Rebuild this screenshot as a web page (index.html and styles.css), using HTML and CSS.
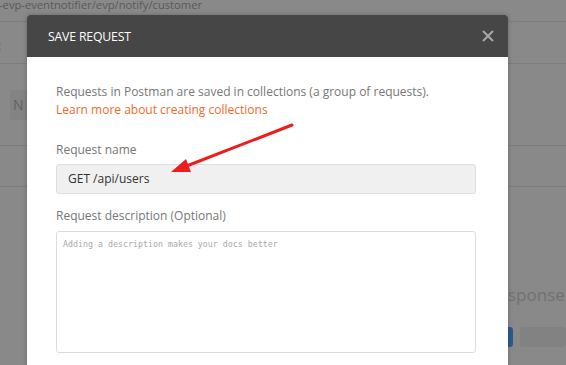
FILE: index.html
```html
<!DOCTYPE html>
<html>
<head>
<meta charset="utf-8">
<link rel="stylesheet" href="styles.css">
</head>
<body>
<div class="app">
  <div class="row row-url"><span class="url">-evp-eventnotifier/evp/notify/customer</span></div>
  <div class="row row-tabs"><span class="tab-c">c</span></div>
  <div class="row row-builder"><div class="btn-n">N</div></div>
  <div class="row row-sub"></div>
  <div class="resp">
    <div class="resp-title">sponse</div>
    <div class="resp-btns"><div class="btn-blue"></div><div class="btn-gray"></div></div>
  </div>
</div>

<div class="modal">
  <div class="modal-head">
    <span class="modal-title">SAVE REQUEST</span>
    <svg class="close" width="14" height="14" viewBox="0 0 14 14"><path d="M2 2 L12 12 M12 2 L2 12" stroke="#a8a8a8" stroke-width="2" fill="none"/></svg>
  </div>
  <div class="modal-body">
    <p class="intro">Requests in Postman are saved in collections (a group of requests).</p>
    <a class="link">Learn more about creating collections</a>
    <label class="lbl lbl-name">Request name</label>
    <div class="input">GET /api/users</div>
    <label class="lbl lbl-desc">Request description (Optional)</label>
    <div class="textarea"><span class="ph">Adding a description makes your docs better</span></div>
    <div class="hint">Descriptions support Markdown</div>
  </div>
</div>

<svg class="arrow" width="566" height="365" viewBox="0 0 566 365">
  <line x1="292" y1="125" x2="184" y2="167" stroke="#ee1c1c" stroke-width="3" stroke-linecap="round"/>
  <polygon points="171,172 186,159 191,172" fill="#ee1c1c"/>
</svg>
</body>
</html>
```
FILE: styles.css
```css
* { box-sizing: border-box; }
html, body { margin: 0; padding: 0; }
body {
  width: 566px;
  height: 365px;
  overflow: hidden;
  background: #898989;
  font-family: "Open Sans", "Liberation Sans", sans-serif;
  position: relative;
}
.app { display: flex; flex-direction: column; height: 365px; }
.row { border-bottom: 1px solid #7d7d7d; }
.row-url { height: 22px; position: relative; }
.url {
  display: block;
  margin-top: -6px;
  margin-left: -1px;
  font-size: 11.2px;
  color: #5a5a5a;
  line-height: 22px;
  white-space: nowrap;
}
.row-tabs { height: 42px; }
.tab-c { display: block; font-size: 13px; color: #6a6a6a; margin-left: -5px; margin-top: 14px; }
.row-builder { height: 82px; padding: 26px 0 0 10px; }
.btn-n {
  width: 19px; height: 30px; background: #838383; border-radius: 2px;
  color: #616161; font-size: 14px; line-height: 30px; padding-left: 3px;
}
.row-sub { height: 41px; }
.resp { margin-top: 98px; padding-left: 508px; }
.resp-title { font-size: 17px; color: #717171; line-height: 20px; }
.resp-btns { display: flex; gap: 7px; margin-top: 22px; margin-left: -8px; }
.btn-blue { width: 17px; height: 20px; background: #2b5a8c; border-radius: 3px; }
.btn-gray { width: 60px; height: 20px; background: #828282; border-radius: 3px; }

.modal {
  position: absolute;
  left: 27px;
  top: 15px;
  width: 481px;
  height: 360px;
  background: #fff;
  border-radius: 3px 3px 0 0;
  box-shadow: 0 0 4px rgba(0,0,0,0.25);
  overflow: hidden;
}
.modal-head {
  height: 42px;
  background: #464646;
  display: flex;
  align-items: center;
  justify-content: space-between;
  padding: 0 13px 0 21px;
}
.modal-title { color: #fff; font-size: 12.3px; letter-spacing: -0.2px; }
.close { display: block; }
.modal-body { padding: 26px 32px 0 29px; display: flex; flex-direction: column; }
.intro { margin: 0; font-size: 12px; color: #777; line-height: 18px; }
.link { font-size: 12px; color: #f26b2a; line-height: 18px; }
.lbl { font-size: 12px; color: #777; line-height: 18px; }
.lbl-name { margin-top: 22px; }
.input {
  margin-top: 5px;
  height: 30px;
  background: #f0f0f0;
  border: 1px solid #dedede;
  border-radius: 3px;
  padding-left: 11px;
  font-size: 12px;
  color: #333;
  line-height: 28px;
}
.lbl-desc { margin-top: 13px; }
.textarea {
  margin-top: 6px;
  height: 122px;
  border: 1px solid #dcdcdc;
  border-radius: 3px;
  padding: 2px 6px;
}
.ph { display: block; font-family: "DejaVu Sans Mono", monospace; font-size: 8.3px; line-height: 20px; color: #aaa; }
.hint { margin-top: 8px; font-size: 11px; line-height: 16px; color: #aaa; }
.arrow { position: absolute; left: 0; top: 0; pointer-events: none; }
```
